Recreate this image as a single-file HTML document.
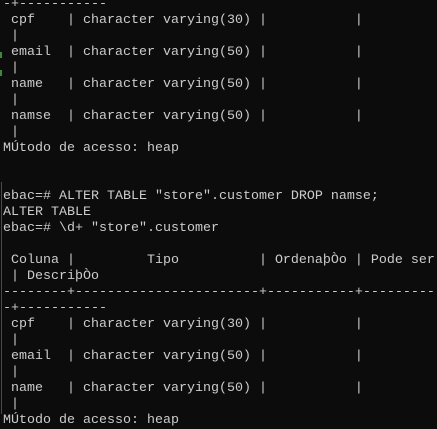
<!DOCTYPE html>
<html><head><meta charset="utf-8"><style>
html,body{margin:0;padding:0;background:#0c0c0c;width:437px;height:414px;overflow:hidden}
pre{position:absolute;left:3px;top:-3px;margin:0;font-family:"Liberation Mono",monospace;font-size:13.33px;line-height:16px;color:#cccccc;white-space:pre}
.l{position:absolute;left:1px;top:182px;width:1px;height:232px;background:#4a4a4a}
.g{position:absolute;left:0;width:2px;background:#3a8a3a}
</style></head><body>
<div class="l"></div>
<div class="g" style="top:52px;height:6px"></div>
<div class="g" style="top:70px;height:6px"></div>
<pre>-+-----------
 cpf    | character varying(30) |           |
 |
 email  | character varying(50) |           |
 |
 name   | character varying(50) |           |
 |
 namse  | character varying(50) |           |
 |
MÚtodo de acesso: heap


ebac=# ALTER TABLE "store".customer DROP namse;
ALTER TABLE
ebac=# \d+ "store".customer

 Coluna |         Tipo          | OrdenaþÒo | Pode ser
 | DescriþÒo
--------+-----------------------+-----------+----------
-+-----------
 cpf    | character varying(30) |           |
 |
 email  | character varying(50) |           |
 |
 name   | character varying(50) |           |
 |
MÚtodo de acesso: heap</pre>
</body></html>
